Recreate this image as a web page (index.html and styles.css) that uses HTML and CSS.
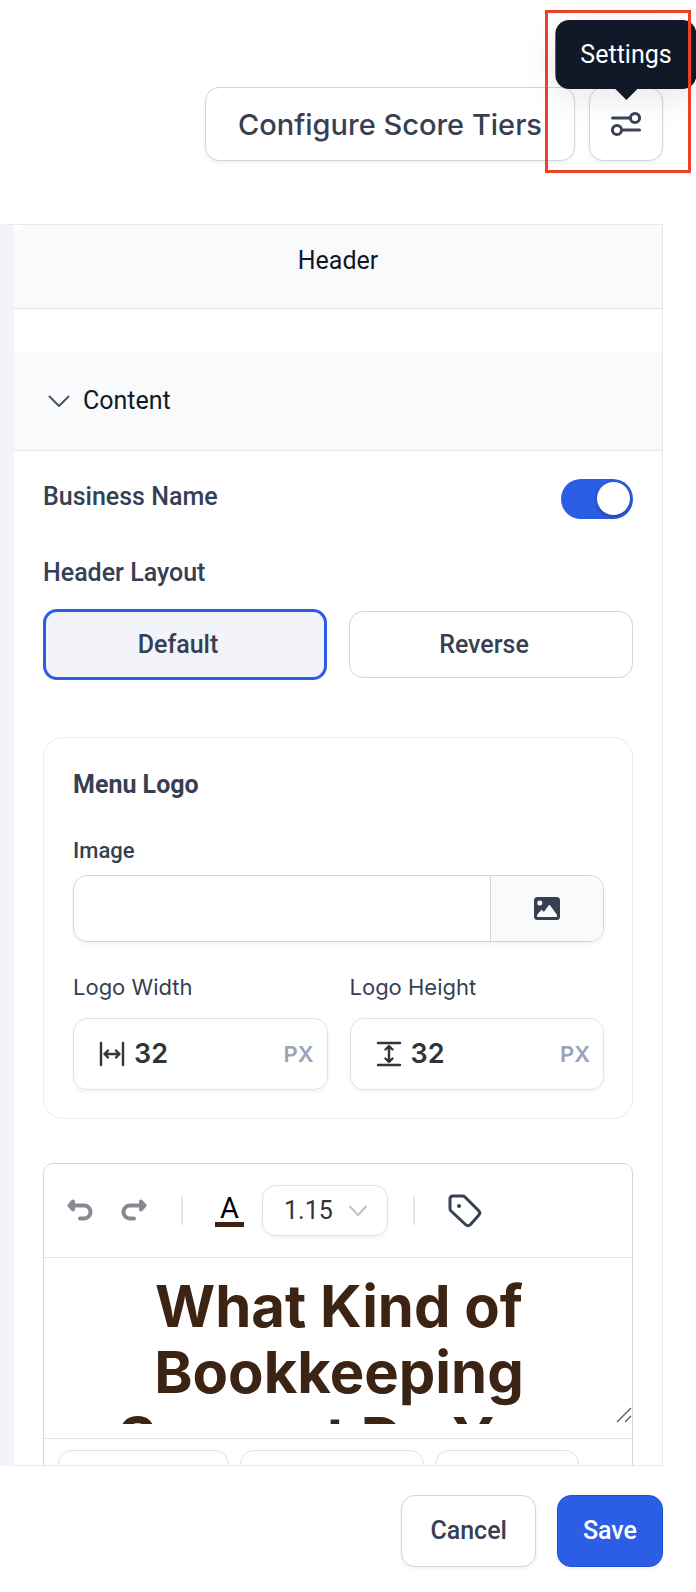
FILE: index.html
```
<!DOCTYPE html>
<html lang="en">
<head>
<meta charset="UTF-8">
<meta name="viewport" content="width=device-width, initial-scale=1">
<title>Header settings</title>
<link rel="stylesheet" href="styles.css">
</head>

<body>

<div class="topbar">
	<button class="btn btn-tiers" type="button">Configure Score Tiers</button>
	<div class="settings">
		<button class="btn btn-icon" type="button" aria-label="Settings" aria-describedby="settings-tip">
			<svg width="32" height="28" viewBox="0 0 32 28" fill="none" stroke="#3a4256" stroke-width="3" stroke-linecap="round">
				<path d="M2.500 8H19M13 20H29.500"/>
				<circle cx="25" cy="8" r="4.600"/>
				<circle cx="7" cy="20" r="4.600"/>
			</svg>
		</button>
		<div class="tooltip" id="settings-tip" role="tooltip">Settings</div>
		<div class="highlight"></div>
	</div>
</div>

<main class="workspace">
	<section class="panel">
		<h2 class="panel-title">Header</h2>

		<button class="section-head" type="button" aria-expanded="true">
			<svg width="22" height="13" viewBox="0 0 22 13" fill="none" stroke="#4b5365" stroke-width="2" stroke-linecap="round" stroke-linejoin="round"><path d="M1.500 1.500L11 11L20.500 1.500"/></svg>
			Content
		</button>

		<div class="section-body">
			<div class="row">
				<label class="label" for="business-name">Business Name</label>
				<input class="switch" id="business-name" type="checkbox" checked>
			</div>

			<div class="label" id="layout-label">Header Layout</div>
			<div class="choices" role="group" aria-labelledby="layout-label">
				<button class="choice active" type="button" aria-pressed="true">Default</button>
				<button class="choice" type="button" aria-pressed="false">Reverse</button>
			</div>

			<div class="card">
				<h3 class="card-title">Menu Logo</h3>
				<label class="small-label" for="logo-image">Image</label>
				<div class="image-field">
					<input class="image-input" id="logo-image" type="text">
					<button class="image-button" type="button" aria-label="Choose image">
						<svg width="26" height="23" viewBox="0 0 26 23">
							<rect width="26" height="23" rx="3.500" fill="#363f53"/>
							<circle cx="5.800" cy="6" r="2.500" fill="#f9fafc"/>
							<path d="M3.500 19.500V18L7.500 13.200L10 15.500L15.400 8L22.500 18V19.500Z" fill="#f9fafc" stroke="#f9fafc" stroke-width="1" stroke-linejoin="round"/>
						</svg>
					</button>
				</div>
				<div class="sizes">
					<div class="size">
						<label class="small-label inter" for="logo-width">Logo Width</label>
						<div class="size-field">
							<svg width="26" height="26" viewBox="0 0 26 26" fill="none" stroke="#333436" stroke-width="2.400" stroke-linecap="round" stroke-linejoin="round"><path d="M2 2V24M24 2V24M5.500 13H20.500M9 9.500L5.500 13L9 16.500M17 9.500L20.500 13L17 16.500"/></svg>
							<input class="size-input" id="logo-width" type="text" value="32">
							<span class="unit">PX</span>
						</div>
					</div>
					<div class="size">
						<label class="small-label inter" for="logo-height">Logo Height</label>
						<div class="size-field">
							<svg width="26" height="26" viewBox="0 0 26 26" fill="none" stroke="#333436" stroke-width="2.400" stroke-linecap="round" stroke-linejoin="round"><path d="M2 2H24M2 24H24M13 5.500V20.500M9.500 8.500L13 5L16.500 8.500M9.500 17.500L13 21L16.500 17.500"/></svg>
							<input class="size-input" id="logo-height" type="text" value="32">
							<span class="unit">PX</span>
						</div>
					</div>
				</div>
			</div>

			<div class="editor">
				<div class="toolbar">
					<button class="tool" type="button" aria-label="Undo">
						<svg width="26" height="24" viewBox="0 0 26 24" fill="none" stroke="#858993" stroke-width="4" stroke-linecap="round" stroke-linejoin="round"><path d="M4 6.500H17A6.500 6.500 0 0 1 17 19.500H13"/><path d="M6 2.500L2.500 6.500L6 10.500Z" fill="#858993"/></svg>
					</button>
					<button class="tool" type="button" aria-label="Redo">
						<svg width="26" height="24" viewBox="0 0 26 24" fill="none" stroke="#858993" stroke-width="4" stroke-linecap="round" stroke-linejoin="round"><path d="M22 6.500H9A6.500 6.500 0 0 0 9 19.500H13"/><path d="M20 2.500L23.500 6.500L20 10.500Z" fill="#858993"/></svg>
					</button>
					<span class="divider"></span>
					<button class="tool color" type="button" aria-label="Text color">A</button>
					<div class="select-wrap">
						<select class="line-height" aria-label="Line height"><option>1.15</option></select>
						<svg class="select-arrow" width="20" height="12" viewBox="0 0 20 12" fill="none" stroke="#c0c2c6" stroke-width="2" stroke-linecap="round" stroke-linejoin="round"><path d="M2 1.500L10 10L18 1.500"/></svg>
					</div>
					<span class="divider"></span>
					<button class="tool tag" type="button" aria-label="Insert tag">
						<svg width="34" height="34" viewBox="0 0 34 34" fill="none" stroke="#363f53" stroke-width="3" stroke-linejoin="round"><path d="M5 2H14.500Q16 2 17 3L30.500 16.500Q33 19 30.500 21.500L22.500 30.500Q20 33 17.500 30.500L3 17Q2 16 2 14.500V5Q2 2 5 2Z"/><circle cx="11" cy="12" r="2" fill="#363f53" stroke="none"/></svg>
					</button>
				</div>
				<div class="editor-text">What Kind of Bookkeeping Support Do You Need?</div>
				<svg class="grip" width="16" height="16" viewBox="0 0 16 16" fill="none" stroke="#66686c" stroke-width="1.500"><path d="M1 15L15 1M9 15L15 9"/></svg>
				<div class="format-bar">
					<select class="format format-a" aria-label="Text style"><option>Header</option></select>
					<select class="format format-b" aria-label="Block type"><option>Paragraph</option></select>
					<select class="format format-c" aria-label="Font size"><option>48</option></select>
				</div>
			</div>
		</div>
	</section>
</main>

<footer class="actions">
	<button class="btn btn-cancel" type="button">Cancel</button>
	<button class="btn btn-save" type="button">Save</button>
</footer>

</body>
</html>
```
FILE: styles.css
```
* {
	box-sizing: border-box;
}

body {
	margin: 0;
	height: 100vh;
	display: flex;
	flex-direction: column;
	overflow: hidden;
	background: #fff;
	color: #363f53;
	font-family: Roboto, "Liberation Sans", sans-serif;
	font-size: 25px;
	line-height: 32px;
}

button, input, select {
	margin: 0;
	padding: 0;
	border: 0;
	background: none;
	color: inherit;
	font: inherit;
}

svg {
	display: block;
	flex: none;
}

h2, h3 {
	margin: 0;
}

/* top bar */

.topbar {
	display: flex;
	justify-content: flex-end;
	gap: 14px;
	padding: 87px 33px 63px;
}

.btn {
	border: 1px solid #d0d5dd;
	border-radius: 14px;
	background: #fff;
	font-weight: 500;
	box-shadow: 0 2px 4px rgba(16, 24, 40, 0.06);
}

.btn-tiers {
	height: 74px;
	padding: 2px 32px 0;
	font-family: Inter, sans-serif;
	font-size: 29px;
}

.settings {
	position: relative;
}

.btn-icon {
	width: 74px;
	height: 74px;
	display: flex;
	align-items: center;
	justify-content: center;
}

.tooltip {
	position: absolute;
	left: 50%;
	bottom: 72px;
	padding: 19px 25px 18px;
	transform: translateX(-50%);
	border-radius: 14px;
	background: #111827;
	color: #fff;
	box-shadow: 0 8px 32px rgba(16, 24, 40, 0.1);
}

.tooltip::after {
	content: "";
	position: absolute;
	top: 100%;
	left: 50%;
	margin-left: -11px;
	border: 11px solid transparent;
	border-top-color: #111827;
	border-bottom: 0;
}

.highlight {
	position: absolute;
	top: -77px;
	right: -28px;
	bottom: -12px;
	left: -44px;
	border: 3px solid #ed4027;
	pointer-events: none;
}

/* panel */

.workspace {
	flex: 1;
	min-height: 0;
	display: flex;
	margin-right: 33px;
	border-top: 1px solid #e6e8ee;
	border-left: 14px solid #f2f4f9;
}

.panel {
	flex: 1;
	min-width: 0;
	overflow: hidden;
	border: solid #e6e8ee;
	border-width: 0 1px 1px 0;
}

.panel-title {
	padding: 20px 0 31px;
	border-bottom: 1px solid #dfe2ea;
	border-top-left-radius: 14px;
	background: #f9fafc;
	color: #111827;
	font-size: 25px;
	font-weight: 400;
	text-align: center;
}

.section-head {
	width: 100%;
	display: flex;
	align-items: center;
	gap: 13px;
	margin-top: 43px;
	padding: 33px 34px;
	border-bottom: 1px solid #e6e8ee;
	background: #f9fafc;
	color: #111827;
}

.section-body {
	padding: 28px 29px 0;
}

.row {
	display: flex;
	justify-content: space-between;
	align-items: flex-start;
	margin-bottom: 36px;
}

.label {
	font-weight: 500;
	line-height: 36px;
}

.switch {
	appearance: none;
	width: 72px;
	height: 40px;
	padding: 3px;
	border-radius: 20px;
	background: #2c5de5;
}

.switch::before {
	content: "";
	display: block;
	width: 33px;
	height: 33px;
	border-radius: 50%;
	background: #fff;
	box-shadow: 0 2px 5px rgba(0, 0, 0, 0.3);
}

.switch:checked::before {
	margin-left: auto;
}

.choices {
	display: grid;
	grid-template-columns: 1fr 1fr;
	align-items: center;
	gap: 22px;
	margin-top: 18px;
}

.choice {
	height: 67px;
	padding-right: 14px;
	border: 1px solid #d0d5dd;
	border-radius: 14px;
	font-weight: 500;
}

.choice.active {
	height: 71px;
	border: 3px solid #2c5de5;
	background: #f2f4f9;
}

/* logo card */

.card {
	margin-top: 57px;
	padding: 31px 28px 28px 29px;
	border: 1px solid #eaecf0;
	border-radius: 20px;
}

.card-title {
	margin-bottom: 35px;
	font-size: 25px;
	font-weight: 700;
}

.small-label {
	display: block;
	font-size: 22px;
	font-weight: 500;
	line-height: 30px;
}

.small-label.inter {
	font-family: Inter, sans-serif;
	font-weight: 400;
}

.image-field {
	display: flex;
	height: 67px;
	margin-top: 9px;
	border: 1px solid #d0d5dd;
	border-radius: 14px;
	overflow: hidden;
	box-shadow: 0 2px 4px rgba(16, 24, 40, 0.06);
}

.image-input {
	flex: 1;
	min-width: 0;
	padding: 0 20px;
}

.image-button {
	width: 113px;
	display: flex;
	align-items: center;
	justify-content: center;
	border-left: 1px solid #d0d5dd;
	background: #f9fafc;
}

.sizes {
	display: grid;
	grid-template-columns: 1fr 1fr;
	gap: 22px;
	margin-top: 30px;
}

.size {
	min-width: 0;
}

.size-field {
	display: flex;
	align-items: center;
	height: 72px;
	margin-top: 16px;
	padding: 0 13px 0 25px;
	border: 1px solid #dfe2e8;
	border-radius: 14px;
	box-shadow: 0 2px 4px rgba(16, 24, 40, 0.05);
}

.size-input {
	flex: 1;
	min-width: 0;
	padding-left: 9px;
	color: #333436;
	font-family: Inter, sans-serif;
	font-size: 27px;
	font-weight: 600;
}

.unit {
	color: #9ca3b5;
	font-family: Inter, sans-serif;
	font-size: 22px;
	font-weight: 600;
}

/* text editor */

.editor {
	position: relative;
	margin-top: 44px;
	border: 1px solid #d0d5dd;
	border-radius: 10px;
}

.toolbar {
	display: flex;
	align-items: center;
	height: 94px;
	padding: 0 23px;
	border-bottom: 1px solid #e2e5ea;
}

.tool + .tool {
	margin-left: 28px;
}

.divider {
	width: 2px;
	height: 29px;
	margin: 0 32px 0 34px;
	background: #e6e7ed;
}

.color {
	width: 29px;
	border-bottom: 5px solid #3c2415;
	color: #000;
	font-size: 29px;
	line-height: 28px;
}

.select-wrap {
	position: relative;
	margin-left: 18px;
}

.line-height {
	appearance: none;
	width: 126px;
	height: 51px;
	padding-left: 21px;
	border: 1px solid #dfe2e8;
	border-radius: 14px;
	color: #333436;
	box-shadow: 0 2px 4px rgba(16, 24, 40, 0.06);
}

.select-arrow {
	position: absolute;
	top: 20px;
	right: 20px;
	pointer-events: none;
}

.select-wrap + .divider {
	margin: 0 33px 0 25px;
}

.editor-text {
	height: 166px;
	padding: 15px 28px 0 30px;
	overflow: hidden;
	color: #3c2415;
	font-family: Inter, sans-serif;
	font-size: 58px;
	font-weight: 700;
	line-height: 66px;
	text-align: center;
}

.grip {
	position: absolute;
	top: 243px;
	right: 0;
}

.format-bar {
	display: flex;
	gap: 11px;
	margin-top: 14px;
	padding: 11px 14px;
	border-top: 1px solid #dfe2e8;
}

.format {
	appearance: none;
	height: 52px;
	padding: 0 24px;
	border: 1px solid #dfe2e8;
	border-radius: 14px;
	color: #333436;
}

.format-a {
	width: 171px;
	padding: 0 16px;
}

.format-b {
	width: 184px;
}

.format-c {
	width: 144px;
}

/* footer */

.actions {
	display: flex;
	justify-content: flex-end;
	gap: 21px;
	padding: 29px 33px 25px;
}

.btn-cancel, .btn-save {
	height: 72px;
	padding: 0 28px;
}

.btn-save {
	padding: 0 25px;
	border-color: #1f50d8;
	background: #2c5de5;
	color: #fff;
}
```
